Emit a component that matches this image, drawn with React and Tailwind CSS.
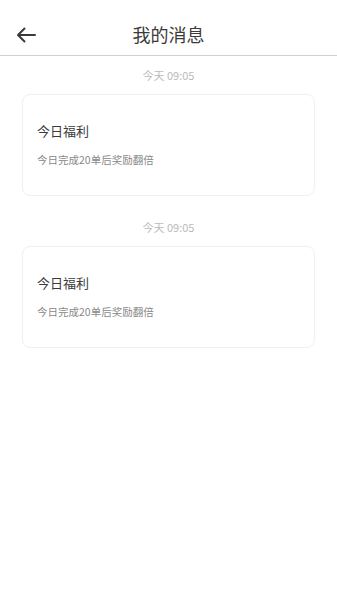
import React from "react";

const messages = [
  { id: 1, time: "今天 09:05", title: "今日福利", content: "今日完成20单后奖励翻倍" },
  { id: 2, time: "今天 09:05", title: "今日福利", content: "今日完成20单后奖励翻倍" },
];

export default function App() {
  return (
    <div
      className="min-h-screen bg-white"
      style={{ fontFamily: '"Noto Sans CJK SC", "Noto Sans", sans-serif' }}
    >
      {/* Header */}
      <div className="relative h-[56px] pt-[12px] flex items-center justify-center border-b-[1.5px] border-[#cfcfcf]">
        <button className="absolute left-[15px] top-[24px] w-[22px] h-[22px] flex items-center justify-center">
          <svg width="20" height="16" viewBox="0 0 20 16" fill="none">
            <path
              d="M19 8H2M8.5 1.5L2 8l6.5 6.5"
              stroke="#3a3a3a"
              strokeWidth="2"
              strokeLinecap="round"
              strokeLinejoin="round"
            />
          </svg>
        </button>
        <h1 className="text-[18px] text-[#3a3a3a] leading-none">我的消息</h1>
      </div>

      {/* Messages */}
      <div className="flex flex-col">
        {messages.map((msg) => (
          <div key={msg.id} className="flex flex-col mb-3">
            <div className="h-[38px] flex items-center justify-center text-[11px] text-[#bbb]">
              {msg.time}
            </div>
            <div className="mx-[22px] h-[102px] rounded-[8px] border border-[#f0f0f0] bg-white px-[14px] pt-[28px]">
              <div className="text-[13px] leading-[16px] text-[#3a3a3a]">{msg.title}</div>
              <div className="mt-[14px] text-[10.5px] leading-[14px] text-[#888]">{msg.content}</div>
            </div>
          </div>
        ))}
      </div>
    </div>
  );
}
